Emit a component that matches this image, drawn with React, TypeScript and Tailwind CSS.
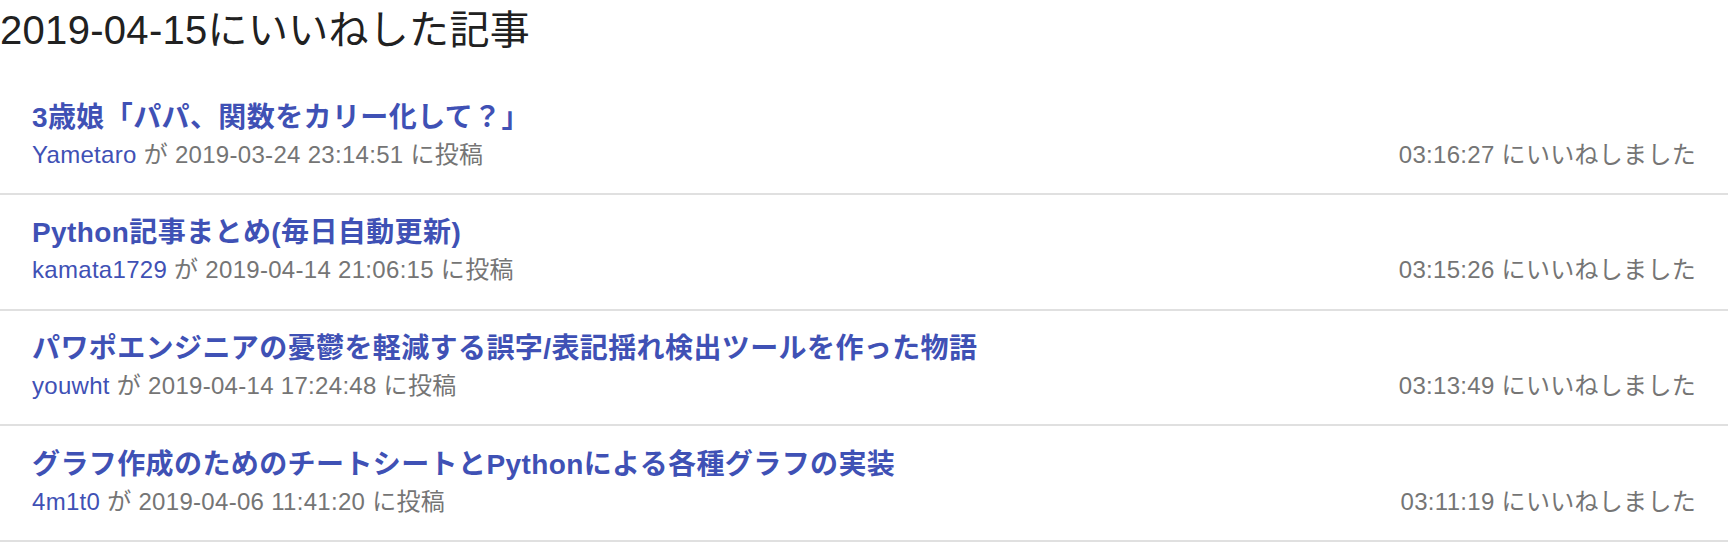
const font = "font-['Liberation_Sans','Noto_Sans_CJK_JP',sans-serif]";

type Like = {
  title: string;
  author: string;
  postedAt: string;
  likedAt: string;
};

const likes: Like[] = [
  {
    title: '3歳娘「パパ、関数をカリー化して？」',
    author: 'Yametaro',
    postedAt: '2019-03-24 23:14:51',
    likedAt: '03:16:27',
  },
  {
    title: 'Python記事まとめ(毎日自動更新)',
    author: 'kamata1729',
    postedAt: '2019-04-14 21:06:15',
    likedAt: '03:15:26',
  },
  {
    title: 'パワポエンジニアの憂鬱を軽減する誤字/表記揺れ検出ツールを作った物語',
    author: 'youwht',
    postedAt: '2019-04-14 17:24:48',
    likedAt: '03:13:49',
  },
  {
    title: 'グラフ作成のためのチートシートとPythonによる各種グラフの実装',
    author: '4m1t0',
    postedAt: '2019-04-06 11:41:20',
    likedAt: '03:11:19',
  },
];

function LikeItem({ item }: { item: Like }) {
  return (
    <li className="border-b-2 border-[#e0e0e0] px-8 pt-[20.3px] pb-[20.37px]">
      {/* Article title */}
      <a
        href="#"
        className="block text-[28px] leading-[36px] font-bold tracking-[0.4px] text-[#3f51b5]"
      >
        {item.title}
      </a>

      {/* Author / posted / liked */}
      <div className="flex items-baseline justify-between text-[24px] leading-[37px] tracking-[0.3px] text-[#757575]">
        <span>
          <a href="#" className="text-[#3f51b5]">
            {item.author}
          </a>{' '}
          が {item.postedAt} に投稿
        </span>
        <span>{item.likedAt} にいいねしました</span>
      </div>
    </li>
  );
}

export default function App() {
  return (
    <div className={`min-h-[560px] w-full bg-white ${font}`}>
      <h2 className="text-[40px] leading-[60px] font-normal tracking-[0.3px] text-[#212121]">
        2019-04-15にいいねした記事
      </h2>

      <ul className="mt-[19.33px]">
        {likes.map((item) => (
          <LikeItem key={item.title} item={item} />
        ))}
      </ul>
    </div>
  );
}
